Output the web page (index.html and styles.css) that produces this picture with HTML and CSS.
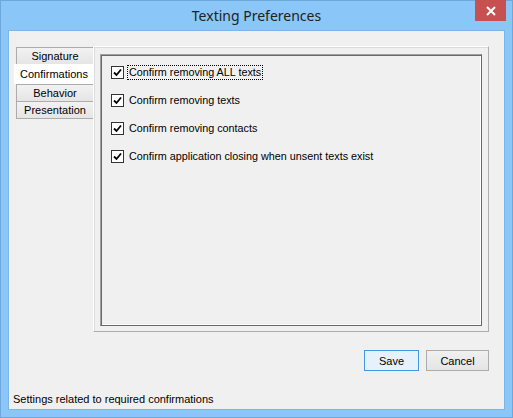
FILE: index.html
```html
<!DOCTYPE html>
<html lang="en">
<head>
    <meta charset="UTF-8">
    <meta name="viewport" content="width=device-width, initial-scale=1.0">
    <title>Texting Preferences</title>
    <link rel="stylesheet" href="styles.css">
</head>
<body>
    <div class="window">
        <div class="titlebar">
            <span class="title">Texting Preferences</span>
            <button class="close-btn">
                <svg width="10" height="10" viewBox="0 0 10 10"><path d="M1 1 L9 9 M9 1 L1 9" stroke="#fff" stroke-width="2"/></svg>
            </button>
        </div>
        <div class="client">
            <div class="main">
                <div class="tabs">
                    <div class="tab">Signature</div>
                    <div class="tab selected">Confirmations</div>
                    <div class="tab">Behavior</div>
                    <div class="tab">Presentation</div>
                </div>
                <div class="panel">
                    <div class="inner">
                        <label class="option">
                            <span class="box"><svg width="9" height="9" viewBox="0 0 9 9"><path d="M1 4.5 L3.5 7 L8 1.5" fill="none" stroke="#000" stroke-width="1.8"/></svg></span>
                            <span class="label focused">Confirm removing ALL texts</span>
                        </label>
                        <label class="option">
                            <span class="box"><svg width="9" height="9" viewBox="0 0 9 9"><path d="M1 4.5 L3.5 7 L8 1.5" fill="none" stroke="#000" stroke-width="1.8"/></svg></span>
                            <span class="label">Confirm removing texts</span>
                        </label>
                        <label class="option">
                            <span class="box"><svg width="9" height="9" viewBox="0 0 9 9"><path d="M1 4.5 L3.5 7 L8 1.5" fill="none" stroke="#000" stroke-width="1.8"/></svg></span>
                            <span class="label">Confirm removing contacts</span>
                        </label>
                        <label class="option">
                            <span class="box"><svg width="9" height="9" viewBox="0 0 9 9"><path d="M1 4.5 L3.5 7 L8 1.5" fill="none" stroke="#000" stroke-width="1.8"/></svg></span>
                            <span class="label">Confirm application closing when unsent texts exist</span>
                        </label>
                    </div>
                </div>
            </div>
            <div class="buttons">
                <button class="btn default">Save</button>
                <button class="btn">Cancel</button>
            </div>
            <div class="status">Settings related to required confirmations</div>
        </div>
    </div>
</body>
</html>
```

FILE: styles.css
```css
body {
    margin: 0;
    font-family: "Liberation Sans", Arial, sans-serif;
    font-size: 11px;
    color: #000;
}

.window {
    width: 513px;
    height: 418px;
    box-sizing: border-box;
    background-color: #8ac6f8;
    border: 1px solid #6fa7da;
    display: flex;
    flex-direction: column;
}

.titlebar {
    height: 29px;
    position: relative;
    display: flex;
    justify-content: center;
    align-items: center;
}

.title {
    font-family: "Noto Sans", sans-serif;
    font-size: 14px;
    color: #222;
    margin-top: -1px;
}

.close-btn {
    position: absolute;
    top: -1px;
    right: 6px;
    width: 31px;
    height: 21px;
    border: none;
    padding: 0;
    background-color: #c75050;
    display: flex;
    justify-content: center;
    align-items: center;
}

.client {
    margin: 0 7px 7px 7px;
    flex: 1;
    background-color: #f0f0f0;
    border: 1px solid #7db5e6;
    padding: 15px 15px 0 5px;
    display: flex;
    flex-direction: column;
}

.main {
    display: flex;
    height: 286px;
}

.tabs {
    width: 79px;
    padding-top: 1px;
    display: flex;
    flex-direction: column;
    position: relative;
    z-index: 1;
}

.tab {
    height: 16px;
    margin-left: 2px;
    border: 1px solid #acacac;
    border-bottom: none;
    border-right: none;
    background: linear-gradient(#f2f2f2, #e5e5e5);
    text-align: center;
    line-height: 16px;
    font-size: 11px;
}

.tab:nth-child(4) {
    border-bottom: 1px solid #acacac;
}

.tab.selected {
    height: 20px;
    line-height: 20px;
    margin-left: 0;
    margin-right: -1px;
    background: #fff;
    border: none;
}

.panel {
    flex: 1;
    border: 1px solid #adadad;
    border-top-color: #fff;
    border-left-color: #fff;
    box-shadow: inset 1px 1px 0 #dcdcdc;
    padding: 7px 6px 5px 6px;
    display: flex;
}

.inner {
    flex: 1;
    border: 1px solid #696969;
    border-top-color: #a0a0a0;
    border-left-color: #a0a0a0;
    box-shadow: inset 1px 1px 0 #696969, inset -1px -1px 0 #fff;
    padding: 11px 10px;
    display: flex;
    flex-direction: column;
    gap: 15px;
}

.option {
    display: flex;
    align-items: center;
    gap: 3px;
    height: 13px;
    font-size: 10.8px;
}

.box {
    width: 11px;
    height: 11px;
    border: 1px solid #333;
    background-color: #fff;
    display: flex;
    justify-content: center;
    align-items: center;
}

.label {
    padding: 0 1px;
    border: 1px solid transparent;
    line-height: 13px;
}

.label.focused {
    border: 1px dotted #000;
}

.buttons {
    display: flex;
    justify-content: flex-end;
    gap: 7px;
    margin-top: 18px;
}

.btn {
    height: 21px;
    width: 63px;
    font-family: "Liberation Sans", Arial, sans-serif;
    font-size: 11px;
    border: 1px solid #acacac;
    background: linear-gradient(#f0f0f0, #e5e5e5);
    padding: 0;
}

.btn.default {
    width: 55px;
    border-color: #3c9ae8;
    background: #e5f1fb;
}

.status {
    margin-top: 22px;
    margin-left: -1px;
}
```
